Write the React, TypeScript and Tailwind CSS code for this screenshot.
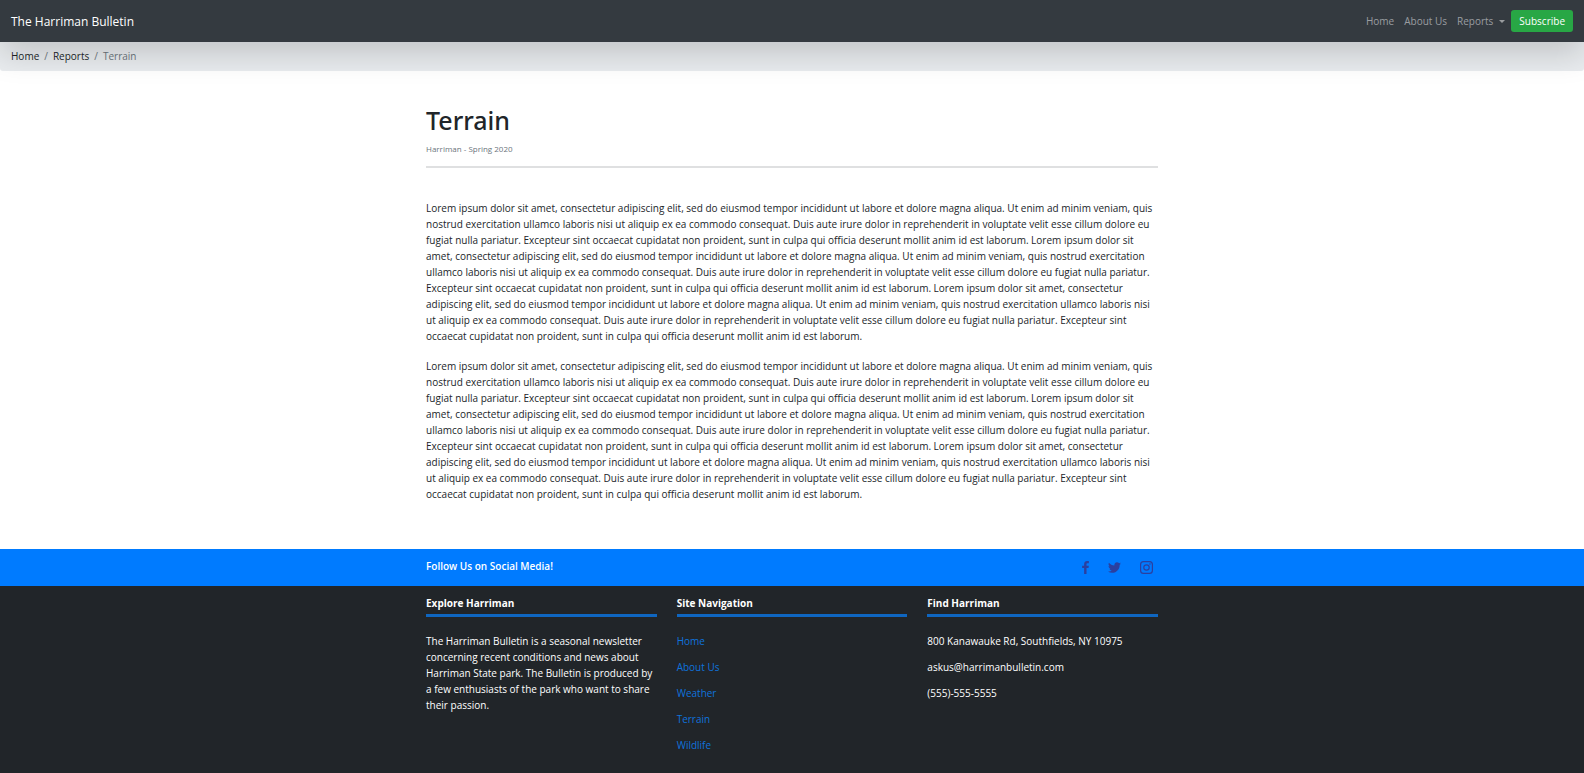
import { FaTwitter } from "react-icons/fa";

const paragraph = [
  "Lorem ipsum dolor sit amet, consectetur adipiscing elit, sed do eiusmod tempor incididunt ut labore et dolore magna aliqua. Ut enim ad minim veniam, quis",
  "nostrud exercitation ullamco laboris nisi ut aliquip ex ea commodo consequat. Duis aute irure dolor in reprehenderit in voluptate velit esse cillum dolore eu",
  "fugiat nulla pariatur. Excepteur sint occaecat cupidatat non proident, sunt in culpa qui officia deserunt mollit anim id est laborum. Lorem ipsum dolor sit",
  "amet, consectetur adipiscing elit, sed do eiusmod tempor incididunt ut labore et dolore magna aliqua. Ut enim ad minim veniam, quis nostrud exercitation",
  "ullamco laboris nisi ut aliquip ex ea commodo consequat. Duis aute irure dolor in reprehenderit in voluptate velit esse cillum dolore eu fugiat nulla pariatur.",
  "Excepteur sint occaecat cupidatat non proident, sunt in culpa qui officia deserunt mollit anim id est laborum. Lorem ipsum dolor sit amet, consectetur",
  "adipiscing elit, sed do eiusmod tempor incididunt ut labore et dolore magna aliqua. Ut enim ad minim veniam, quis nostrud exercitation ullamco laboris nisi",
  "ut aliquip ex ea commodo consequat. Duis aute irure dolor in reprehenderit in voluptate velit esse cillum dolore eu fugiat nulla pariatur. Excepteur sint",
  "occaecat cupidatat non proident, sunt in culpa qui officia deserunt mollit anim id est laborum.",
];

const siteLinks = ["Home", "About Us", "Weather", "Terrain", "Wildlife"];

function Body() {
  return (
    <p className="lg:whitespace-nowrap">
      {paragraph.map((line) => (
        <span key={line} className="lg:block">
          {line}{" "}
        </span>
      ))}
    </p>
  );
}

function ColumnTitle({ children }: { children: string }) {
  return (
    <h2 className="mb-4 border-b-[3px] border-[#0f66c0] pb-[3px] font-bold">{children}</h2>
  );
}

function FacebookIcon() {
  return (
    <svg viewBox="97 0 862 1664" className="h-[13px] w-[7px]" fill="currentColor" aria-hidden="true">
      <path d="M959 12v264H802q-86 0-115 36t-29 108v189h293l-39 296H658v759H352V905H97V609h255V391q0-186 104-288.5T733 0q147 0 226 12z" />
    </svg>
  );
}

function InstagramIcon() {
  return (
    <svg viewBox="0 0 24 24" className="size-[13px]" fill="none" stroke="currentColor" strokeWidth="2.2" aria-hidden="true">
      <rect x="1.1" y="1.1" width="21.8" height="21.8" rx="5.4" />
      <circle cx="12" cy="12" r="5" />
      <circle cx="18.4" cy="5.6" r="1.4" fill="currentColor" stroke="none" />
    </svg>
  );
}

export default function App() {
  return (
    <div className="flex min-h-screen flex-col bg-white font-['Open_Sans','Noto_Sans',sans-serif] text-[10px] leading-4 text-[#212529]">
      <nav className="relative z-10 flex items-center justify-between bg-[#343a40] px-[11px] py-[10px] shadow-[0_11px_32px_rgba(0,0,0,0.176)]">
        <a href="#" className="pt-[2px] text-[12px] leading-5 text-white">
          The Harriman Bulletin
        </a>
        <div className="flex items-center gap-[10px] text-[#9a9da0]">
          <a href="#">Home</a>
          <a href="#">About Us</a>
          <button type="button" className="-mr-1 flex items-center gap-[6px]">
            Reports
            <span className="border-x-[3px] border-t-[3px] border-x-transparent border-t-current" />
          </button>
          <button type="button" className="h-[22px] rounded-[3px] bg-[#28a745] px-2 text-white">
            Subscribe
          </button>
        </div>
      </nav>

      <ol className="flex gap-[5px] rounded-b-[3px] bg-[#e9ecef] px-[11px] pt-[6px] pb-[7px]">
        <li><a href="#">Home</a></li>
        <li className="text-[#6c757d]">/</li>
        <li><a href="#">Reports</a></li>
        <li className="text-[#6c757d]">/</li>
        <li className="text-[#6c757d]">Terrain</li>
      </ol>

      <main className="mx-auto w-full max-w-[732px] grow pt-[33px] pb-[47px]">
        <h1 className="font-['Noto_Sans','Open_Sans',sans-serif] text-[25px] leading-8 font-medium">Terrain</h1>
        <p className="mt-[5px] text-[8px] text-[#6c757d]">Harriman - Spring 2020</p>
        <hr className="mt-[9px] mb-8 border-t-2 border-[#dfe0e1]" />
        <div className="flex flex-col gap-[14px]">
          <Body />
          <Body />
        </div>
      </main>

      <footer className="bg-[#212529] text-white">
        <div className="bg-[#007bff] py-[9px]">
          <div className="mx-auto flex h-[19px] w-full max-w-[732px] justify-between">
            <strong className="font-semibold">Follow Us on Social Media!</strong>
            <div className="flex items-center gap-[19px] pr-[5px] text-[13px] text-[#2b3f9f]">
              <a href="#" aria-label="Facebook"><FacebookIcon /></a>
              <a href="#" aria-label="Twitter"><FaTwitter /></a>
              <a href="#" aria-label="Instagram"><InstagramIcon /></a>
            </div>
          </div>
        </div>
        <div className="mx-auto grid w-full max-w-[732px] grid-cols-1 gap-x-5 pt-[9px] pb-[21px] sm:grid-cols-3">
          <section>
            <ColumnTitle>Explore Harriman</ColumnTitle>
            <p>
              The Harriman Bulletin is a seasonal newsletter concerning recent conditions and news
              about Harriman State park. The Bulletin is produced by a few enthusiasts of the park
              who want to share their passion.
            </p>
          </section>
          <section>
            <ColumnTitle>Site Navigation</ColumnTitle>
            <ul className="flex flex-col gap-[10px] text-[#0f73dd]">
              {siteLinks.map((name) => (
                <li key={name}><a href="#">{name}</a></li>
              ))}
            </ul>
          </section>
          <section>
            <ColumnTitle>Find Harriman</ColumnTitle>
            <address className="flex flex-col gap-[10px] not-italic">
              <span>800 Kanawauke Rd, Southfields, NY 10975</span>
              <span>askus@harrimanbulletin.com</span>
              <span>(555)-555-5555</span>
            </address>
          </section>
        </div>
      </footer>
    </div>
  );
}
